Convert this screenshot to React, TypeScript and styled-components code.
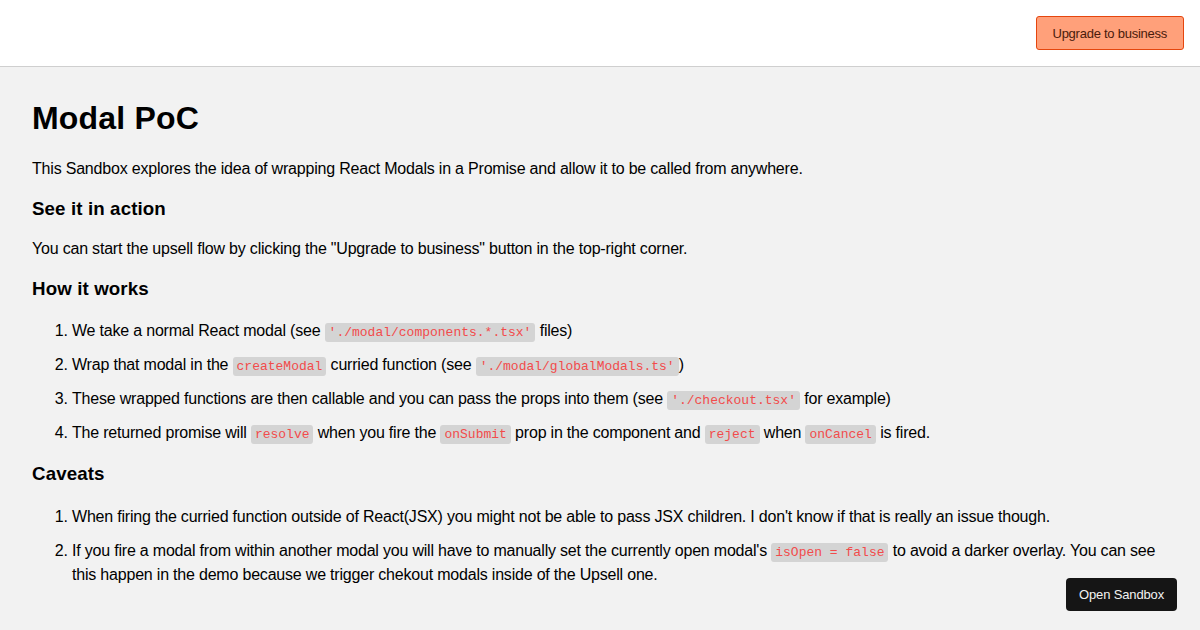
import React from "react";
import styled, { createGlobalStyle } from "styled-components";

const Global = createGlobalStyle`
  html, body { margin: 0; padding: 0; }
  body {
    background: #f2f2f2;
    font-family: "Liberation Sans", Arial, sans-serif;
    color: #000;
  }
`;

const Header = styled.header`
  height: 67px;
  background: #ffffff;
  border-bottom: 1px solid #cfcfcf;
  display: flex;
  align-items: flex-start;
  justify-content: flex-end;
  padding: 16px 16px 0 0;
  box-sizing: border-box;
`;

const UpgradeButton = styled.button`
  height: 34px;
  padding: 0 16px;
  background: #ffa07a;
  border: 1px solid #e5460e;
  border-radius: 3px;
  color: #4a1b0c;
  font-family: "Liberation Sans", Arial, sans-serif;
  font-size: 13px;
  letter-spacing: -0.25px;
  cursor: pointer;
`;

const Main = styled.main`
  padding: 12px 32px 24px;
`;

const Title = styled.h1`
  font-size: 32px;
  font-weight: bold;
  letter-spacing: 0.2px;
  margin: 21.44px 0;
`;

const Text = styled.p`
  font-size: 16px;
  line-height: 20px;
  letter-spacing: -0.2px;
  margin: 16px 0;
`;

const Heading = styled.h3`
  font-size: 18.72px;
  line-height: 22.5px;
  font-weight: bold;
  letter-spacing: 0.12px;
  margin: 18.72px 0;
`;

const List = styled.ol`
  margin: 16px 0;
  padding-left: 40px;
`;

const Item = styled.li`
  font-size: 16px;
  line-height: 24px;
  letter-spacing: -0.2px;
  margin-bottom: 10px;
`;

const Code = styled.code`
  font-family: "Liberation Mono", "Courier New", monospace;
  font-size: 13px;
  line-height: 1;
  letter-spacing: 0;
  color: #f24b4b;
  background: #d4d4d4;
  padding: 2px 4px;
  border-radius: 3px;
`;

const SandboxButton = styled.a`
  position: fixed;
  right: 23px;
  bottom: 19px;
  height: 33px;
  padding: 0 13px;
  display: flex;
  align-items: center;
  background: #151515;
  color: #f2f2f2;
  border-radius: 4px;
  font-family: "Liberation Sans", Arial, sans-serif;
  font-size: 13px;
  letter-spacing: -0.15px;
  text-decoration: none;
`;

export default function App() {
  return (
    <>
      <Global />
      <Header>
        <UpgradeButton>Upgrade to business</UpgradeButton>
      </Header>
      <Main>
        <Title>Modal PoC</Title>
        <Text>
          This Sandbox explores the idea of wrapping React Modals in a Promise and allow it to be called from anywhere.
        </Text>
        <Heading>See it in action</Heading>
        <Text>
          You can start the upsell flow by clicking the "Upgrade to business" button in the top-right corner.
        </Text>
        <Heading>How it works</Heading>
        <List>
          <Item>
            We take a normal React modal (see <Code>'./modal/components.*.tsx'</Code> files)
          </Item>
          <Item>
            Wrap that modal in the <Code>createModal</Code> curried function (see{" "}
            <Code>'./modal/globalModals.ts'</Code>)
          </Item>
          <Item>
            These wrapped functions are then callable and you can pass the props into them (see{" "}
            <Code>'./checkout.tsx'</Code> for example)
          </Item>
          <Item>
            The returned promise will <Code>resolve</Code> when you fire the <Code>onSubmit</Code> prop in the
            component and <Code>reject</Code> when <Code>onCancel</Code> is fired.
          </Item>
        </List>
        <Heading>Caveats</Heading>
        <List>
          <Item>
            When firing the curried function outside of React(JSX) you might not be able to pass JSX children. I
            don't know if that is really an issue though.
          </Item>
          <Item>
            If you fire a modal from within another modal you will have to manually set the currently open modal's{" "}
            <Code>isOpen = false</Code> to avoid a darker overlay. You can see this happen in the demo because we
            trigger chekout modals inside of the Upsell one.
          </Item>
        </List>
      </Main>
      <SandboxButton href="#">Open Sandbox</SandboxButton>
    </>
  );
}
